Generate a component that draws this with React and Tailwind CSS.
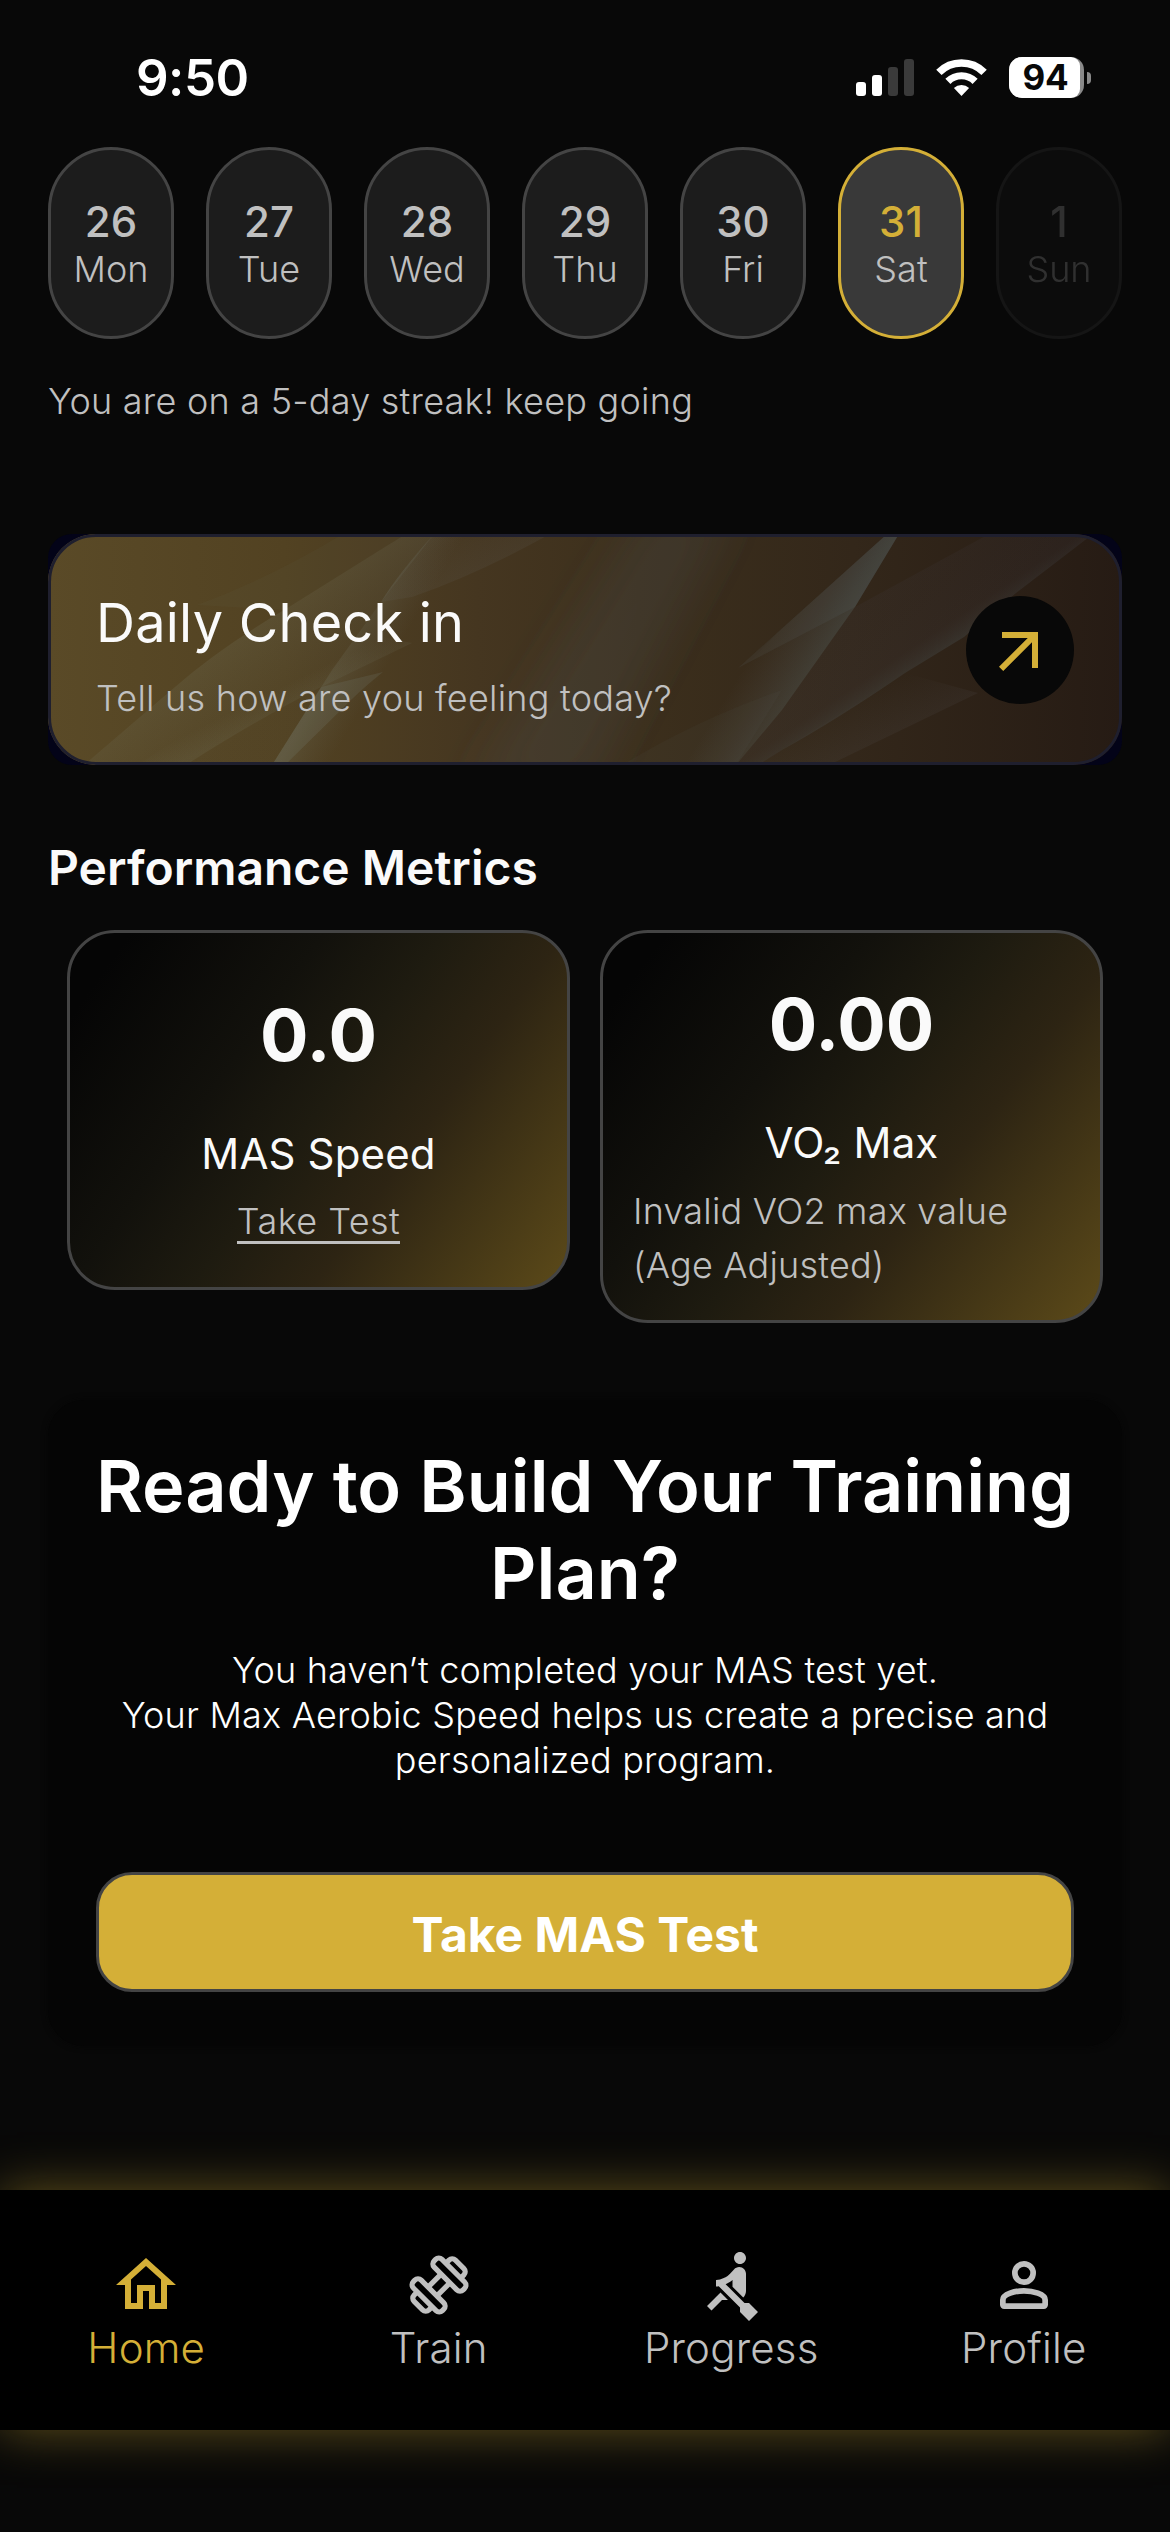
import { MdOutlineHome, MdRowing, MdOutlineArrowOutward } from 'react-icons/md'

const days = [
  { num: '26', name: 'Mon' },
  { num: '27', name: 'Tue' },
  { num: '28', name: 'Wed' },
  { num: '29', name: 'Thu' },
  { num: '30', name: 'Fri' },
  { num: '31', name: 'Sat', active: true },
  { num: '1', name: 'Sun', disabled: true },
]

const navItems = [
  { label: 'Home', Icon: MdOutlineHome, active: true },
  { label: 'Train', Icon: DumbbellIcon },
  { label: 'Progress', Icon: MdRowing },
  { label: 'Profile', Icon: PersonIcon },
]

function DumbbellIcon({ className }) {
  return (
    <svg viewBox="0 0 72 72" className={className} fill="none" stroke="currentColor" strokeWidth="5.2">
      <g transform="rotate(-45 36 36)">
        <rect x="45.2" y="15.5" width="11" height="41" rx="4.5" />
        <rect x="15.8" y="15.5" width="11" height="41" rx="4.5" />
        <path d="M26.8 29.8h18.4M26.8 42.2h18.4" />
        <path d="M56.2 25.5h4.5a4.5 4.5 0 0 1 4.5 4.5v12a4.5 4.5 0 0 1-4.5 4.5h-4.5" />
        <path d="M15.8 25.5h-4.5a4.5 4.5 0 0 0-4.5 4.5v12a4.5 4.5 0 0 0 4.5 4.5h4.5" />
      </g>
    </svg>
  )
}

function PersonIcon({ className }) {
  return (
    <svg viewBox="0 0 24 24" className={className} fill="none" stroke="currentColor" strokeWidth="1.9">
      <circle cx="12" cy="8" r="3.05" />
      <path d="M4.95 17c0-2 4.1-3.05 7.05-3.05S19.05 15 19.05 17v1.6a.45.45 0 0 1-.45.45H5.4a.45.45 0 0 1-.45-.45z" />
    </svg>
  )
}

function StatusBar() {
  return (
    <div className="flex h-[147px] items-start justify-between pl-[136px] pr-[79px]">
      <div className="mt-[47px] text-[51px] leading-[62px] font-semibold tracking-[-0.5px] text-white">9:50</div>
      <div className="mt-[57px] flex h-[41px] items-center">
        <div className="flex h-[37px] items-end gap-[6px]">
          <div className="h-[14px] w-[10px] rounded-[3px] bg-white" />
          <div className="h-[21px] w-[10px] rounded-[3px] bg-white" />
          <div className="h-[29px] w-[10px] rounded-[3px] bg-[#3a3a3a]" />
          <div className="h-[37px] w-[10px] rounded-[3px] bg-[#3a3a3a]" />
        </div>
        <svg viewBox="0 0 51 37" className="ml-[22px] h-[37px] w-[51px]" fill="none" stroke="#fff">
          <path d="M2.9 13.4a32 32 0 0 1 45.2 0" strokeWidth="7.6" />
          <path d="M11.9 22.4a19.2 19.2 0 0 1 27.2 0" strokeWidth="7.2" />
          <path d="M25.5 37l-7.6-8a11 11 0 0 1 15.2 0z" fill="#fff" stroke="none" />
        </svg>
        <div className="ml-[22px] flex h-[41px] w-[75px] overflow-hidden rounded-[13px] bg-[#8a8a8a]">
          <div className="flex h-full w-[71px] items-center justify-center rounded-r-[9px] bg-white pl-[2px] text-[35px] font-bold tracking-[-0.2px] text-[#080808]">
            94
          </div>
        </div>
        <div className="ml-[3px] h-[12px] w-[4px] rounded-r-full bg-[#8a8a8a]" />
      </div>
    </div>
  )
}

function DayPill({ day }) {
  const look = day.active ? 'border-[#d4af37] bg-[#393939]' : 'border-[#444444] bg-[#1c1c1c]'
  return (
    <div
      className={`flex h-[192px] w-[126px] flex-col items-center rounded-full border-[3px] pt-[46px] ${look} ${day.disabled ? 'opacity-[0.22]' : ''}`}
    >
      <div className={`text-[42px] leading-[51px] font-medium ${day.active ? 'text-[#d4af37]' : 'text-[#c0c0c0]'}`}>{day.num}</div>
      <div className="text-[36px] leading-[44px] font-[350] text-[#c0c0c0] [font-optical-sizing:none]">{day.name}</div>
    </div>
  )
}

// light streaks behind the check in card
function Streaks() {
  return (
    <svg viewBox="0 0 1074 231" preserveAspectRatio="none" className="absolute inset-0 h-full w-full">
      <defs>
        <linearGradient id="fadeA" gradientUnits="userSpaceOnUse" x1="180" y1="110" x2="225" y2="185">
          <stop offset="0" stopColor="#8c9a8c" stopOpacity="0.13" />
          <stop offset="1" stopColor="#6c7a78" stopOpacity="0.03" />
        </linearGradient>
        <linearGradient id="fadeB" gradientUnits="userSpaceOnUse" x1="308" y1="100" x2="345" y2="122">
          <stop offset="0" stopColor="#8fa3a0" stopOpacity="0.14" />
          <stop offset="1" stopColor="#70808a" stopOpacity="0" />
        </linearGradient>
        <linearGradient id="fadeC" gradientUnits="userSpaceOnUse" x1="440" y1="32" x2="425" y2="0">
          <stop offset="0" stopColor="#737a80" stopOpacity="0.1" />
          <stop offset="1" stopColor="#737a80" stopOpacity="0.04" />
        </linearGradient>
        <linearGradient id="fadeD" gradientUnits="userSpaceOnUse" x1="205" y1="192" x2="195" y2="172">
          <stop offset="0" stopColor="#8c9a8c" stopOpacity="0.1" />
          <stop offset="1" stopColor="#8c9a8c" stopOpacity="0" />
        </linearGradient>
        <linearGradient id="fadeG" gradientUnits="userSpaceOnUse" x1="782" y1="110" x2="730" y2="78">
          <stop offset="0" stopColor="#6f8c94" stopOpacity="0.22" />
          <stop offset="1" stopColor="#6c7480" stopOpacity="0" />
        </linearGradient>
        <linearGradient id="fadeI" gradientUnits="userSpaceOnUse" x1="905" y1="112" x2="870" y2="60">
          <stop offset="0" stopColor="#5b7078" stopOpacity="0.22" />
          <stop offset="0.35" stopColor="#4a4858" stopOpacity="0.12" />
          <stop offset="1" stopColor="#4a4858" stopOpacity="0.1" />
        </linearGradient>
        <linearGradient id="fadeJ" gradientUnits="userSpaceOnUse" x1="860" y1="196" x2="838" y2="150">
          <stop offset="0" stopColor="#6c6f78" stopOpacity="0.1" />
          <stop offset="1" stopColor="#6c6f78" stopOpacity="0" />
        </linearGradient>
        <filter id="soft" x="-50%" y="-50%" width="200%" height="200%">
          <feGaussianBlur stdDeviation="22" />
        </filter>
      </defs>
      <path d="M600 -30L690 -30L540 260L420 260Z" fill="#4e5560" fillOpacity="0.2" filter="url(#soft)" />
      <path d="M295 0Q220 45 149 71L236 76L340 11L358 0Z" fill="#7c8478" fillOpacity="0.05" />
      <path d="M358 0L340 11L236 76Q170 115 127 153L36 231H224L284 136L333 68L386 0Z" fill="url(#fadeA)" />
      <path d="M386 0Q350 40 333 68L284 136L224 231H330L420 100L502 0Z" fill="url(#fadeB)" />
      <path d="M386 0H502Q430 40 364 63L333 68Q350 40 386 0Z" fill="url(#fadeC)" />
      <path d="M138 231Q210 185 273 153L364 109L320 100L150 190L90 231Z" fill="url(#fadeD)" />
      <path d="M224 231L273 153L335 138Q310 158 291 178L237 231Z" fill="#8ea3a0" fillOpacity="0.13" />
      <path d="M839 0H851L807 73L734 176L688 231H600L700 130L730 98Z" fill="url(#fadeG)" />
      <path d="M839 0H851L807 73L690 134L730 98Z" fill="#6c7c88" fillOpacity="0.1" />
      <path d="M941 0H1045L968 59L916 103L857 139Q790 185 734 216L710 231H688L734 176L807 73Z" fill="url(#fadeI)" />
      <path d="M574 231Q650 185 734 156L688 231Z" fill="#6c6f78" fillOpacity="0.06" />
      <path d="M930 159L781 231H710L734 216L857 139Z" fill="url(#fadeJ)" />
    </svg>
  )
}

function CheckInCard() {
  return (
    <div className="relative mt-[111px] h-[231px] overflow-hidden rounded-[24px] bg-[#030318]">
      <div className="relative h-full overflow-hidden rounded-[48px] bg-[linear-gradient(90deg,#5a4a27_0%,#524222_22%,#453620_40%,#3c2f1c_55%,#33271a_75%,#261b14_100%)]">
        <Streaks />
        <div className="relative flex h-full items-center justify-between rounded-[48px] border-[3px] border-[#1f1f2e] px-[45px]">
          <div className="pt-[10px]">
            <div className="text-[54px] leading-[66px] font-normal tracking-[0.25px] text-[#fafafa]">Daily Check in</div>
            <div className="mt-[20px] text-[36px] leading-[44px] font-[350] tracking-[0.24px] text-[#c0c0c0] [font-optical-sizing:none]">
              Tell us how are you feeling today?
            </div>
          </div>
          <button className="flex size-[108px] items-center justify-center rounded-full bg-[#080808]">
            <MdOutlineArrowOutward className="size-[72px] text-[#d4af37]" />
          </button>
        </div>
      </div>
    </div>
  )
}

function MetricCard({ value, label, className, children }) {
  return (
    <div className={`flex w-[503px] flex-col items-center rounded-[48px] border-[3px] border-[#444444] px-[30px] ${className}`}>
      <div className="text-[72px] leading-[87px] font-bold text-[#fafafa]">{value}</div>
      <div className="mt-[50px] text-[42px] leading-[51px] font-normal tracking-[0.15px] text-[#fafafa]">{label}</div>
      {children}
    </div>
  )
}

function TrainingPlan() {
  return (
    <div className="mt-[77px] flex flex-col items-center rounded-[36px] bg-[#050505] px-[48px] pt-[42px] pb-[54px] text-center shadow-[0_0_6px_#060606]">
      <h2 className="text-[72px] leading-[87px] font-semibold whitespace-nowrap text-white">
        Ready to Build Your Training
        <br />
        Plan?
      </h2>
      <p className="mt-[32px] text-[36px] leading-[45px] font-[350] tracking-[0.2px] whitespace-nowrap text-white [font-optical-sizing:none]">
        You haven’t completed your MAS test yet.
        <br />
        Your Max Aerobic Speed helps us create a precise and
        <br />
        personalized program.
      </p>
      <button className="mt-[89px] h-[120px] w-full rounded-[36px] border-[3px] border-[#444444] bg-[#d4af37] pt-[6px] text-[48px] font-bold text-white">
        Take MAS Test
      </button>
    </div>
  )
}

function BottomNav() {
  return (
    <nav className="grid h-[240px] grid-cols-4 bg-black shadow-[0_0_48px_rgba(212,175,55,0.44)]">
      {navItems.map(({ label, Icon, active }) => (
        <div key={label} className={`flex flex-col items-center pt-[59px] ${active ? 'text-[#d4af37]' : 'text-[#c0c0c0]'}`}>
          <Icon className="size-[72px]" />
          <div className="mt-px text-[42px] leading-[51px] font-[350] tracking-[0.2px] [font-optical-sizing:none]">{label}</div>
        </div>
      ))}
    </nav>
  )
}

export default function App() {
  return (
    <div className="flex h-[2532px] w-[1170px] flex-col overflow-hidden bg-[#080808] font-[Inter,sans-serif]">
      <StatusBar />
      <main className="flex h-[2043px] flex-col px-[48px]">
        <div className="flex justify-between">
          {days.map((day) => (
            <DayPill key={day.num} day={day} />
          ))}
        </div>
        <p className="mt-[40px] text-[36px] leading-[44px] font-[350] tracking-[0.24px] text-[#c0c0c0] [font-optical-sizing:none]">
          You are on a 5-day streak! keep going
        </p>

        <CheckInCard />

        <h2 className="mt-[74px] text-[48px] leading-[58px] font-[570] text-[#fafafa]">Performance Metrics</h2>
        <div className="mt-[33px] flex items-start justify-center gap-[30px]">
          <MetricCard
            value="0.0"
            label="MAS Speed"
            className="h-[360px] bg-[linear-gradient(125.5deg,#050505_8%,#12110c_34%,#1e1b10_50%,#2d2413_66%,#5c4a19_100%)] pt-[58px]"
          >
            <div className="mt-[23px] border-b-[3px] border-[#c0c0c0] text-[36px] leading-[39px] font-[350] tracking-[0.45px] text-[#c0c0c0] [font-optical-sizing:none]">
              Take Test
            </div>
          </MetricCard>
          <MetricCard
            value="0.00"
            label="VO₂ Max"
            className="h-[393px] bg-[linear-gradient(128deg,#050505_8%,#12110c_34%,#1e1b10_50%,#2d2413_66%,#5c4a19_100%)] pt-[47px]"
          >
            <div className="mt-[16px] w-full text-[36px] leading-[54px] font-[350] tracking-[0.2px] text-[#c0c0c0] [font-optical-sizing:none]">
              Invalid VO2 max value (Age Adjusted)
            </div>
          </MetricCard>
        </div>

        <TrainingPlan />
      </main>
      <BottomNav />
    </div>
  )
}
